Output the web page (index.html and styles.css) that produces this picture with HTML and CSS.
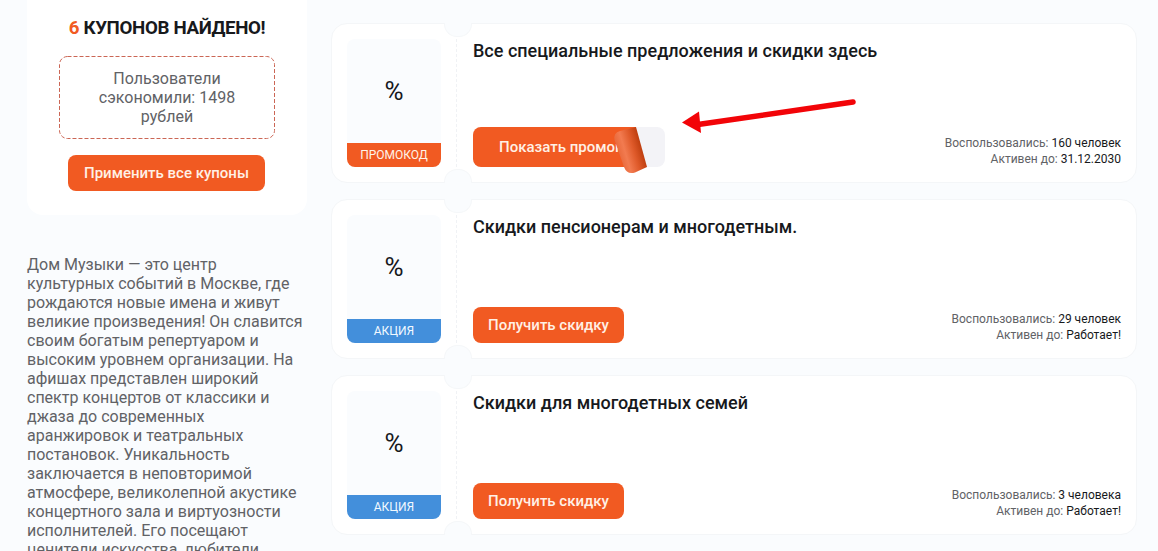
FILE: index.html
```html
<!DOCTYPE html>
<html lang="ru">
<head>
<meta charset="utf-8">
<title>Дом Музыки — купоны</title>
<link rel="stylesheet" href="styles.css">
</head>
<body>
<div class="page">
  <aside class="sidebar">
    <section class="summary">
      <h2 class="summary-title"><span class="count">6</span> КУПОНОВ НАЙДЕНО!</h2>
      <div class="saved">
        <svg class="saved-border" width="216" height="83"><rect x="0.5" y="0.5" width="215" height="82" rx="8"/></svg>
        Пользователи сэкономили: 1498 рублей
      </div>
      <a class="button apply">Применить все купоны</a>
    </section>
    <p class="about">Дом Музыки — это центр<br>культурных событий в Москве, где<br>рождаются новые имена и живут<br>великие произведения! Он славится<br>своим богатым репертуаром и<br>высоким уровнем организации. На<br>афишах представлен широкий<br>спектр концертов от классики и<br>джаза до современных<br>аранжировок и театральных<br>постановок. Уникальность<br>заключается в неповторимой<br>атмосфере, великолепной акустике<br>концертного зала и виртуозности<br>исполнителей. Его посещают<br>ценители искусства, любители</p>
  </aside>
  <main class="coupons">
    <article class="coupon">
      <div class="tile"><span class="percent">%</span><span class="label promo">ПРОМОКОД</span></div>
      <div class="divider"></div>
      <div class="content">
        <h3 class="title">Все специальные предложения и скидки здесь</h3>
        <div class="bottom">
          <a class="reveal">
            <span class="reveal-face">Показать промокод</span>
            <svg class="curl" width="36" height="48" viewBox="0 0 36 48">
              <defs><linearGradient id="fold" gradientUnits="userSpaceOnUse" x1="5" y1="27" x2="29" y2="20">
                <stop offset="0" stop-color="#e8683a"/><stop offset=".3" stop-color="#f27b50"/><stop offset=".65" stop-color="#df5a2a"/><stop offset="1" stop-color="#bd3d0e"/>
              </linearGradient></defs>
              <path fill="url(#fold)" d="M23 0 34 40 22 45.500Q14 48 11 40L1.500 13Q0 6 7 4Z"/>
            </svg>
          </a>
          <div class="stats"><div>Воспользовались: <b>160 человек</b></div><div>Активен до: <b>31.12.2030</b></div></div>
        </div>
      </div>
      <svg class="arrow" width="180" height="40" viewBox="0 0 180 40">
        <path class="arrow-shaft" d="M20 29.500 175 7"/><path class="arrow-head" d="M4 27.500 21 16.500 23 38Z"/>
      </svg>
    </article>
    <article class="coupon">
      <div class="tile"><span class="percent">%</span><span class="label action">АКЦИЯ</span></div>
      <div class="divider"></div>
      <div class="content">
        <h3 class="title">Скидки пенсионерам и многодетным.</h3>
        <div class="bottom">
          <a class="button">Получить скидку</a>
          <div class="stats"><div>Воспользовались: <b>29 человек</b></div><div>Активен до: <b>Работает!</b></div></div>
        </div>
      </div>
    </article>
    <article class="coupon">
      <div class="tile"><span class="percent">%</span><span class="label action">АКЦИЯ</span></div>
      <div class="divider"></div>
      <div class="content">
        <h3 class="title">Скидки для многодетных семей</h3>
        <div class="bottom">
          <a class="button">Получить скидку</a>
          <div class="stats"><div>Воспользовались: <b>3 человека</b></div><div>Активен до: <b>Работает!</b></div></div>
        </div>
      </div>
    </article>
  </main>
</div>
</body>
</html>
```
FILE: styles.css
```css
* { box-sizing: border-box; }
body {
  margin: 0;
  height: 551px;
  overflow: hidden;
  background: #fafcfe;
  color: #17191c;
  font-family: Roboto, "Liberation Sans", sans-serif;
}
.page { display: flex; gap: 24px; padding-left: 27px; }
.sidebar { width: 280px; flex: none; }
.summary {
  height: 215px;
  padding: 17px 32px 0;
  display: flex;
  flex-direction: column;
  align-items: center;
  background: #fff;
  border-radius: 0 0 16px 16px;
}
.summary-title {
  margin: 0;
  font-size: 18.72px;
  line-height: 22px;
  font-weight: 700;
  letter-spacing: -0.34px;
  white-space: nowrap;
}
.count { color: #f15a22; }
.saved {
  position: relative;
  width: 216px;
  height: 83px;
  margin: 17px 0 16px;
  padding: 13px 32px;
  color: #616266;
  font-size: 16px;
  line-height: 19px;
  text-align: center;
}
.saved-border { position: absolute; inset: 0; }
.saved-border rect { fill: none; stroke: #cb6655; stroke-width: 1; stroke-dasharray: 4 2; }
.button {
  display: flex;
  align-items: center;
  justify-content: center;
  width: 151px;
  height: 36px;
  border-radius: 8px;
  background: #f15a22;
  color: #fff0e5;
  font-size: 15px;
  font-weight: 500;
  white-space: nowrap;
}
.apply { width: 197px; margin-right: 1px; }
.about {
  margin: 40px 0 0;
  color: #616266;
  font-size: 16px;
  line-height: 19px;
  white-space: nowrap;
}
.coupons { width: 806px; padding-top: 23px; display: flex; flex-direction: column; gap: 16px; }
.coupon {
  position: relative;
  display: flex;
  height: 160px;
  padding: 15px;
  background: #fff;
  border: 1px solid #f4f6f8;
  border-radius: 16px;
}
.tile {
  width: 94px;
  height: 128px;
  display: flex;
  flex-direction: column;
  border-radius: 8px;
  overflow: hidden;
  background: #fafcfe;
}
.percent { flex: 1; display: flex; align-items: center; justify-content: center; font-size: 26px; }
.label { height: 24px; line-height: 24px; text-align: center; font-size: 12px; color: #fff3e8; }
.promo { background: #f15a22; }
.action { background: #438fdb; color: #f2f9ff; }
.divider { width: 1px; margin: 0 16px 0 15px; border-left: 1px dashed #f0f2f5; }
.divider::before, .divider::after {
  content: "";
  position: absolute;
  left: 112px;
  width: 26px;
  height: 13px;
  background: #fafcfe;
  border: 1px solid #f5f7f9;
}
.divider::before { top: -1px; border-top: 0; border-radius: 0 0 13px 13px; }
.divider::after { bottom: -1px; border-bottom: 0; border-radius: 13px 13px 0 0; }
.content { flex: 1; display: flex; flex-direction: column; justify-content: space-between; }
.title { margin: 0; font-size: 18px; line-height: 24px; font-weight: 500; white-space: nowrap; }
.bottom { display: flex; justify-content: space-between; align-items: flex-end; }
.stats { text-align: right; font-size: 12px; line-height: 16px; color: #616266; }
.stats b { font-weight: 400; color: #17191c; }
.reveal { position: relative; width: 192px; height: 40px; border-radius: 8px; background: #f3f3f7; }
.reveal-face {
  display: block;
  width: 174px;
  height: 40px;
  padding-left: 26px;
  border-radius: 8px 0 0 8px;
  background: #f15a22;
  color: #fff0e5;
  font-size: 15px;
  line-height: 40px;
  font-weight: 500;
  white-space: nowrap;
  clip-path: polygon(0 0, 163px 0, 155px 40px, 0 40px);
}
.curl { position: absolute; left: 140px; top: 0; }
.arrow { position: absolute; left: 346px; top: 71px; }
.arrow-shaft { fill: none; stroke: #f20408; stroke-width: 5.500; stroke-linecap: round; }
.arrow-head { fill: #f20408; }
```
